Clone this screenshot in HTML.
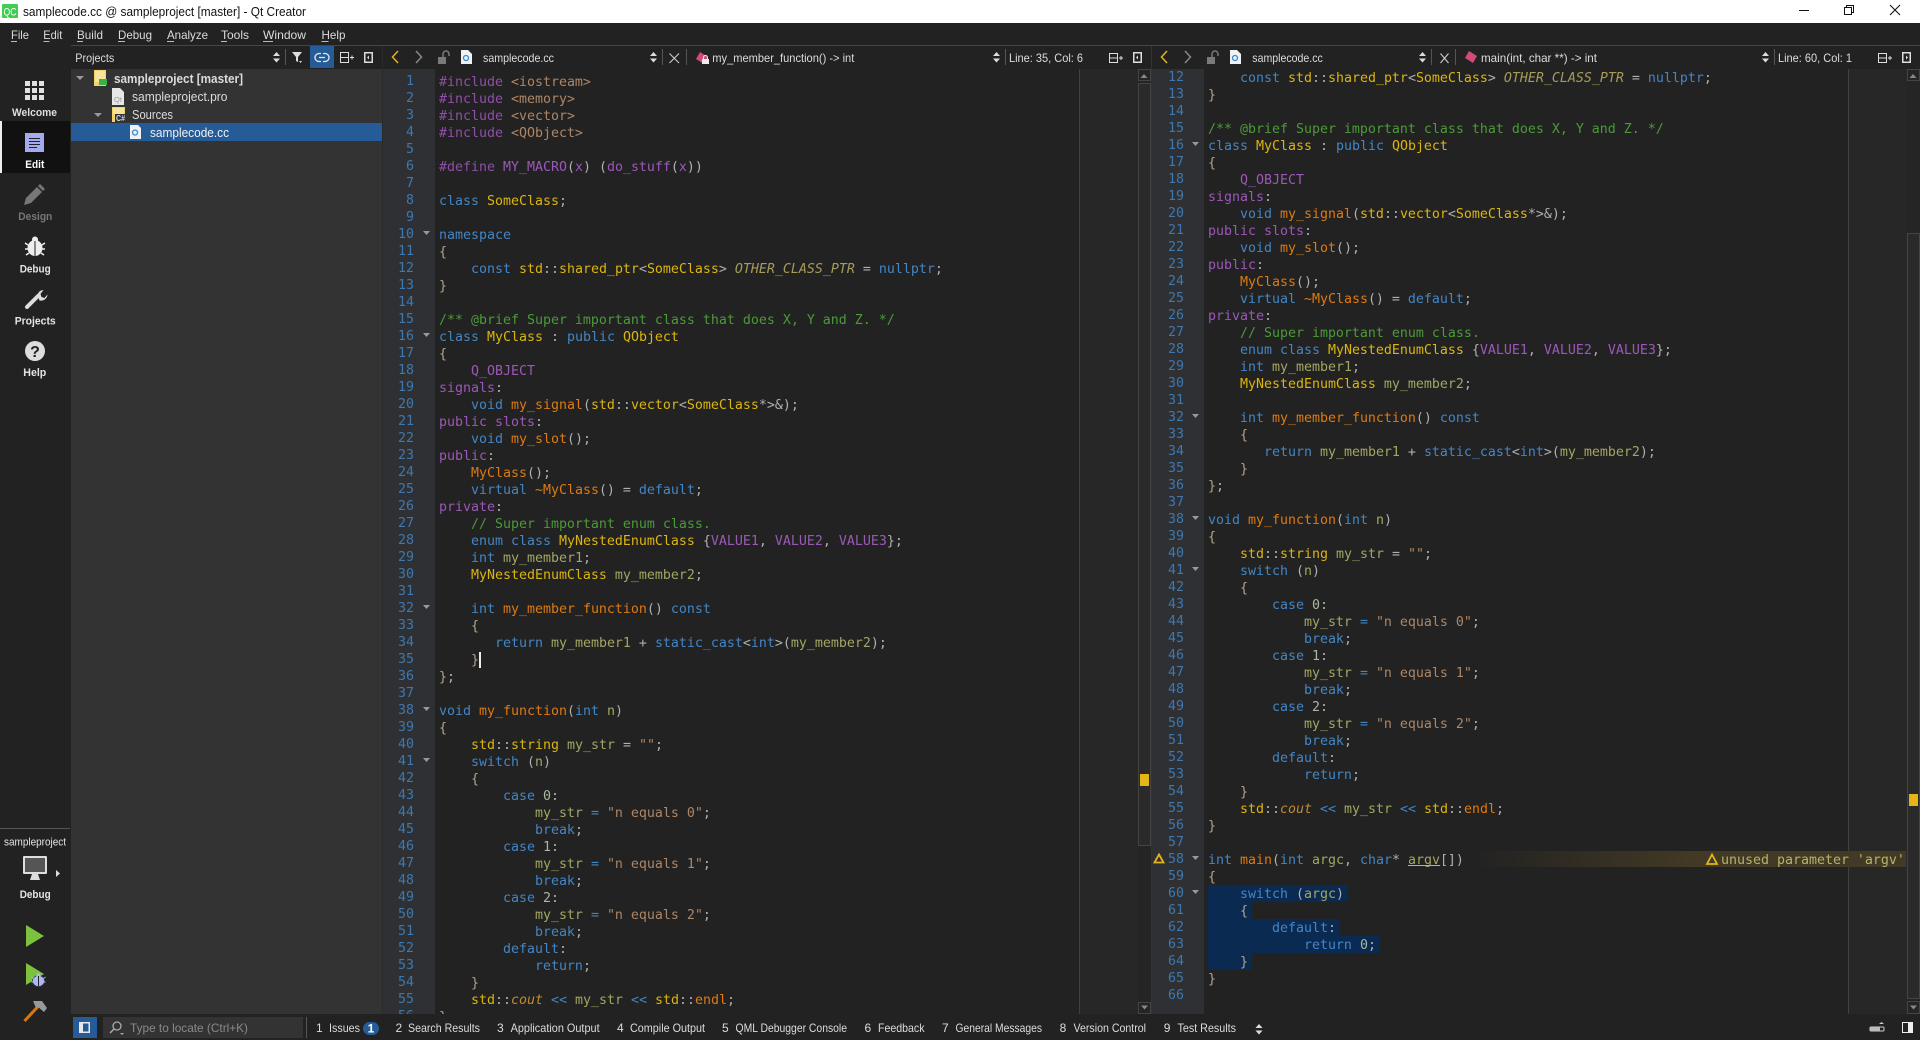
<!DOCTYPE html>
<html><head><meta charset="utf-8"><title>samplecode.cc @ sampleproject [master] - Qt Creator</title>
<style>
html,body{margin:0;padding:0;width:1920px;height:1040px;overflow:hidden;background:#222}
svg.l{position:absolute;left:0;top:0}
svg text{font-family:"Liberation Sans",sans-serif;font-size:12px;fill:#dcdcdc}
pre{position:absolute;margin:0;font:13.29px/17px "DejaVu Sans Mono","Liberation Mono",monospace;color:#b0b0b0;overflow:hidden;z-index:2}
.n{color:#3e78b0;text-align:right}
.k{color:#4386c5}.t{color:#dcb50e}.f{color:#de7a12}.c{color:#4c9a38}.p{color:#8f4fa8}.m{color:#9c58b8}.s{color:#ad8666}.v{color:#a3a662}.i{color:#a69c58;font-style:italic}.o{color:#a9b8a0}.b{color:#b3a48c}.y{color:#c08a30;font-style:italic}
</style></head><body>
<svg class="l" width="1920" height="1040" style="z-index:1">
<defs><linearGradient id="w" x1="0" x2="1"><stop offset="0" stop-color="#222"/><stop offset="1" stop-color="#433a25"/></linearGradient></defs>
<rect width="1920" height="23" fill="#fff"/>
<rect y="23" width="1920" height="22" fill="#222"/>
<rect x="71" y="45" width="1849" height="1" fill="#454545"/>
<rect x="71" y="69" width="311" height="945" fill="#333"/>
<rect x="0" y="121" width="70" height="52" fill="#111"/>
<rect x="0" y="121" width="2" height="52" fill="#eee"/>
<rect x="71" y="123" width="311" height="18" fill="#255c97"/>
<rect x="0" y="828" width="70" height="1" fill="#555"/>
<rect x="382" y="46" width="1" height="968" fill="#2a2a2a"/>
<rect x="383" y="69" width="52" height="945" fill="#2e3033"/>
<rect x="1152" y="69" width="52" height="945" fill="#2e3033"/>
<rect x="1151" y="46" width="1" height="968" fill="#333"/>
<rect x="1079" y="69" width="59" height="945" fill="#272727"/>
<rect x="1848" y="69" width="59" height="945" fill="#272727"/>
<rect x="1079" y="69" width="1" height="945" fill="#414141"/>
<rect x="1848" y="69" width="1" height="945" fill="#414141"/>
<rect x="1138" y="69" width="13" height="945" fill="#252525"/>
<rect x="1907" y="69" width="13" height="945" fill="#252525"/>
<rect x="1138.5" y="83.5" width="12" height="762" fill="#2a2a2a" stroke="#444"/>
<rect x="1907.5" y="233.5" width="12" height="765" fill="#2a2a2a" stroke="#444"/>
<rect x="1208" y="885" width="140" height="17" fill="#0a2a52"/>
<rect x="1208" y="902" width="44" height="17" fill="#0a2a52"/>
<rect x="1208" y="919" width="132" height="17" fill="#0a2a52"/>
<rect x="1208" y="936" width="172" height="17" fill="#0a2a52"/>
<rect x="1208" y="953" width="44" height="17" fill="#0a2a52"/>
<rect x="1473" y="851" width="227" height="16" fill="url(#w)"/>
<rect x="1700" y="851" width="206" height="16" fill="#433a25"/>
<rect x="103" y="1017" width="200" height="21" fill="#333"/>
<rect x="306" y="1017" width="1" height="21" fill="#555"/>
</svg>

<pre class="n" style="left:383px;top:73px;width:31px;height:941px">1
2
3
4
5
6
7
8
9
10
11
12
13
14
15
16
17
18
19
20
21
22
23
24
25
26
27
28
29
30
31
32
33
34
35
36
37
38
39
40
41
42
43
44
45
46
47
48
49
50
51
52
53
54
55
56</pre>
<pre style="left:439px;top:74px;width:690px;height:940px"><span class="p">#include</span> <span class="s">&lt;iostream&gt;</span>
<span class="p">#include</span> <span class="s">&lt;memory&gt;</span>
<span class="p">#include</span> <span class="s">&lt;vector&gt;</span>
<span class="p">#include</span> <span class="s">&lt;QObject&gt;</span>

<span class="p">#define</span> <span class="m">MY_MACRO</span>(<span class="m">x</span>) (<span class="m">do_stuff</span>(<span class="m">x</span>))

<span class="k">class</span> <span class="t">SomeClass</span>;

<span class="k">namespace</span>
<span class="b">{</span>
    <span class="k">const</span> <span class="t">std</span>::<span class="t">shared_ptr</span>&lt;<span class="t">SomeClass</span>&gt; <span class="i">OTHER_CLASS_PTR</span> = <span class="k">nullptr</span>;
<span class="b">}</span>

<span class="c">/** @brief Super important class that does X, Y and Z. */</span>
<span class="k">class</span> <span class="t">MyClass</span> : <span class="k">public</span> <span class="t">QObject</span>
<span class="b">{</span>
    <span class="m">Q_OBJECT</span>
<span class="m">signals</span>:
    <span class="k">void</span> <span class="f">my_signal</span>(<span class="t">std</span>::<span class="t">vector</span>&lt;<span class="t">SomeClass</span>*&gt;&amp;);
<span class="m">public slots</span>:
    <span class="k">void</span> <span class="f">my_slot</span>();
<span class="m">public</span>:
    <span class="f">MyClass</span>();
    <span class="k">virtual</span> <span class="f">~MyClass</span>() = <span class="k">default</span>;
<span class="m">private</span>:
    <span class="c">// Super important enum class.</span>
    <span class="k">enum class</span> <span class="t">MyNestedEnumClass</span> {<span class="m">VALUE1</span>, <span class="m">VALUE2</span>, <span class="m">VALUE3</span>};
    <span class="k">int</span> <span class="v">my_member1</span>;
    <span class="t">MyNestedEnumClass</span> <span class="v">my_member2</span>;

    <span class="k">int</span> <span class="f">my_member_function</span>() <span class="k">const</span>
    <span class="b">{</span>
       <span class="k">return</span> <span class="v">my_member1</span> + <span class="k">static_cast</span>&lt;<span class="k">int</span>&gt;(<span class="v">my_member2</span>);
    <span class="b">}</span>
<span class="b">}</span>;

<span class="k">void</span> <span class="f">my_function</span>(<span class="k">int</span> <span class="v">n</span>)
<span class="b">{</span>
    <span class="t">std</span>::<span class="t">string</span> <span class="v">my_str</span> = <span class="s">""</span>;
    <span class="k">switch</span> (<span class="v">n</span>)
    <span class="b">{</span>
        <span class="k">case</span> <span class="o">0</span>:
            <span class="v">my_str</span> <span class="k">=</span> <span class="s">"n equals 0"</span>;
            <span class="k">break</span>;
        <span class="k">case</span> <span class="o">1</span>:
            <span class="v">my_str</span> <span class="k">=</span> <span class="s">"n equals 1"</span>;
            <span class="k">break</span>;
        <span class="k">case</span> <span class="o">2</span>:
            <span class="v">my_str</span> <span class="k">=</span> <span class="s">"n equals 2"</span>;
            <span class="k">break</span>;
        <span class="k">default</span>:
            <span class="k">return</span>;
    <span class="b">}</span>
    <span class="t">std</span>::<span class="y">cout</span> <span class="k">&lt;&lt;</span> <span class="v">my_str</span> <span class="k">&lt;&lt;</span> <span class="t">std</span>::<span class="f">endl</span>;
<span class="b">}</span></pre>

<pre class="n" style="left:1153px;top:69px;width:31px;height:945px">12
13
14
15
16
17
18
19
20
21
22
23
24
25
26
27
28
29
30
31
32
33
34
35
36
37
38
39
40
41
42
43
44
45
46
47
48
49
50
51
52
53
54
55
56
57
58
59
60
61
62
63
64
65
66</pre>
<pre style="left:1208px;top:70px;width:690px;height:944px">    <span class="k">const</span> <span class="t">std</span>::<span class="t">shared_ptr</span>&lt;<span class="t">SomeClass</span>&gt; <span class="i">OTHER_CLASS_PTR</span> = <span class="k">nullptr</span>;
<span class="b">}</span>

<span class="c">/** @brief Super important class that does X, Y and Z. */</span>
<span class="k">class</span> <span class="t">MyClass</span> : <span class="k">public</span> <span class="t">QObject</span>
<span class="b">{</span>
    <span class="m">Q_OBJECT</span>
<span class="m">signals</span>:
    <span class="k">void</span> <span class="f">my_signal</span>(<span class="t">std</span>::<span class="t">vector</span>&lt;<span class="t">SomeClass</span>*&gt;&amp;);
<span class="m">public slots</span>:
    <span class="k">void</span> <span class="f">my_slot</span>();
<span class="m">public</span>:
    <span class="f">MyClass</span>();
    <span class="k">virtual</span> <span class="f">~MyClass</span>() = <span class="k">default</span>;
<span class="m">private</span>:
    <span class="c">// Super important enum class.</span>
    <span class="k">enum class</span> <span class="t">MyNestedEnumClass</span> {<span class="m">VALUE1</span>, <span class="m">VALUE2</span>, <span class="m">VALUE3</span>};
    <span class="k">int</span> <span class="v">my_member1</span>;
    <span class="t">MyNestedEnumClass</span> <span class="v">my_member2</span>;

    <span class="k">int</span> <span class="f">my_member_function</span>() <span class="k">const</span>
    <span class="b">{</span>
       <span class="k">return</span> <span class="v">my_member1</span> + <span class="k">static_cast</span>&lt;<span class="k">int</span>&gt;(<span class="v">my_member2</span>);
    <span class="b">}</span>
<span class="b">}</span>;

<span class="k">void</span> <span class="f">my_function</span>(<span class="k">int</span> <span class="v">n</span>)
<span class="b">{</span>
    <span class="t">std</span>::<span class="t">string</span> <span class="v">my_str</span> = <span class="s">""</span>;
    <span class="k">switch</span> (<span class="v">n</span>)
    <span class="b">{</span>
        <span class="k">case</span> <span class="o">0</span>:
            <span class="v">my_str</span> <span class="k">=</span> <span class="s">"n equals 0"</span>;
            <span class="k">break</span>;
        <span class="k">case</span> <span class="o">1</span>:
            <span class="v">my_str</span> <span class="k">=</span> <span class="s">"n equals 1"</span>;
            <span class="k">break</span>;
        <span class="k">case</span> <span class="o">2</span>:
            <span class="v">my_str</span> <span class="k">=</span> <span class="s">"n equals 2"</span>;
            <span class="k">break</span>;
        <span class="k">default</span>:
            <span class="k">return</span>;
    <span class="b">}</span>
    <span class="t">std</span>::<span class="y">cout</span> <span class="k">&lt;&lt;</span> <span class="v">my_str</span> <span class="k">&lt;&lt;</span> <span class="t">std</span>::<span class="f">endl</span>;
<span class="b">}</span>

<span class="k">int</span> <span class="f">main</span>(<span class="k">int</span> <span class="v">argc</span>, <span class="k">char</span>* <span class="v">argv</span>[])
<span class="b">{</span>
    <span class="k">switch</span> (<span class="v">argc</span>)
    <span class="b">{</span>
        <span class="k">default</span>:
            <span class="k">return</span> <span class="o">0</span>;
    <span class="b">}</span>
<span class="b">}</span>
</pre>
<pre style="left:1721px;top:852px;width:190px;height:17px;color:#b4b46a">unused parameter 'argv'</pre>

<svg class="l" width="1920" height="1040" style="z-index:3">
<!-- title bar -->
<rect x="2" y="4" width="16" height="14" rx="1" fill="#41cd52"/>
<text x="3.5" y="15.5" style="font-size:11px;fill:#fff" textLength="13" lengthAdjust="spacingAndGlyphs">QC</text>
<text x="23" y="16" style="font-size:12.5px;fill:#111" textLength="283" lengthAdjust="spacingAndGlyphs">samplecode.cc @ sampleproject [master] - Qt Creator</text>
<rect x="1799" y="10" width="10" height="1" fill="#111"/>
<path d="M1844.5 7.5h7v7h-7zM1846.5 7.5v-2h7v7h-2" fill="none" stroke="#111"/>
<path d="M1890 5l10 10M1900 5l-10 10" stroke="#111" stroke-width="1.1"/>
<!-- menu -->
<text x="11" y="39" textLength="18" lengthAdjust="spacingAndGlyphs">File</text>
<text x="43.3" y="39" textLength="19" lengthAdjust="spacingAndGlyphs">Edit</text>
<text x="77" y="39" textLength="26" lengthAdjust="spacingAndGlyphs">Build</text>
<text x="118" y="39" textLength="34" lengthAdjust="spacingAndGlyphs">Debug</text>
<text x="167" y="39" textLength="41" lengthAdjust="spacingAndGlyphs">Analyze</text>
<text x="221" y="39" textLength="28" lengthAdjust="spacingAndGlyphs">Tools</text>
<text x="263" y="39" textLength="43" lengthAdjust="spacingAndGlyphs">Window</text>
<text x="321.5" y="39" textLength="24" lengthAdjust="spacingAndGlyphs">Help</text>
<path d="M11 41.5h6M43.5 41.5h6M77 41.5h6M118 41.5h7M167 41.5h7M221 41.5h6M263 41.5h10M321.5 41.5h7" stroke="#bbb"/>
<!-- project toolbar -->
<text x="75.3" y="62" textLength="39" lengthAdjust="spacingAndGlyphs">Projects</text>
<g fill="#ddd">
<path d="M273 56l3.5-4 3.5 4zM273 58.5h7l-3.5 4z"/>
<path d="M650 56l3.5-4 3.5 4zM650 58.5h7l-3.5 4z"/>
<path d="M993 56l3.5-4 3.5 4zM993 58.5h7l-3.5 4z"/>
<path d="M1419 56l3.5-4 3.5 4zM1419 58.5h7l-3.5 4z"/>
<path d="M1762 56l3.5-4 3.5 4zM1762 58.5h7l-3.5 4z"/>
<path d="M1255.5 1028l3.5-4 3.5 4zM1255.5 1030.5h7l-3.5 4z"/>
</g>
<path d="M285.5 49v16M662.5 49v16M686.5 49v16M1005.5 49v16M1431.5 49v16M1455.5 49v16M1774.5 49v16" stroke="#555"/>
<path d="M292 52h10l-4 5v5l-2-1v-4z" fill="#ddd"/><path d="M299 61h3l-1.500 2z" fill="#ddd"/>
<rect x="310" y="46" width="24" height="22" fill="#255c97"/>
<path d="M321 53.500h-2a4 4 0 0 0 0 8h2M323 53.500h2a4 4 0 0 1 0 8h-2M319 57.500h6" fill="none" stroke="#e8e8e8" stroke-width="1.300"/>
<g fill="none" stroke="#ddd">
<rect x="340.500" y="52.500" width="8" height="10"/><path d="M340.500 57.500h8M350 57.500h4M352 55.500v4"/>
<rect x="1109.500" y="53.500" width="8" height="9"/><path d="M1109.500 58h8M1119 58h4M1121 56v4"/>
<rect x="1878.500" y="53.500" width="8" height="9"/><path d="M1878.500 58h8M1888 58h4M1890 56v4"/>
</g>
<g>
<rect x="364" y="52" width="9" height="11" fill="#ddd"/><rect x="365.500" y="53.500" width="6" height="8" fill="#222"/><path d="M369 55.500v4l-2-2z" fill="#ddd"/>
<rect x="1133" y="52" width="9" height="11" fill="#ddd"/><rect x="1134.500" y="53.500" width="6" height="8" fill="#222"/><path d="M1138 55.500v4l-2-2z" fill="#ddd"/>
<rect x="1902" y="52" width="9" height="11" fill="#ddd"/><rect x="1903.500" y="53.500" width="6" height="8" fill="#222"/><path d="M1906 55.500v4l2-2z" fill="#ddd"/>
</g>
<!-- nav chevrons -->
<path d="M398 51l-5.500 6 5.500 6M1167 51l-5.500 6 5.500 6" fill="none" stroke="#e3b41b" stroke-width="1.500"/>
<path d="M416 51l5.500 6-5.500 6M1185 51l5.500 6-5.500 6" fill="none" stroke="#888" stroke-width="1.500"/>
<!-- lock -->
<g fill="#7a7a7a"><rect x="438" y="57" width="8" height="7"/><path d="M443 57v-3a3 3 0 0 1 6 0v2" fill="none" stroke="#7a7a7a" stroke-width="1.500"/>
<rect x="1207" y="57" width="8" height="7"/><path d="M1212 57v-3a3 3 0 0 1 6 0v2" fill="none" stroke="#7a7a7a" stroke-width="1.500"/></g>
<!-- file icons -->
<path d="M461 50h7l4 4v10h-11z" fill="#eef1f5"/><circle cx="466" cy="58" r="2.500" fill="none" stroke="#3a88c8" stroke-width="1.300"/>
<path d="M1230 50h7l4 4v10h-11z" fill="#eef1f5"/><circle cx="1235" cy="58" r="2.500" fill="none" stroke="#3a88c8" stroke-width="1.300"/>
<text x="483" y="62" textLength="71" lengthAdjust="spacingAndGlyphs">samplecode.cc</text>
<text x="1252.300" y="62" textLength="70.500" lengthAdjust="spacingAndGlyphs">samplecode.cc</text>
<path d="M669.500 53.500l9.500 9.500M679 53.500l-9.500 9.500M1440.500 53.500l8 9.500M1448.500 53.500l-8 9.500" stroke="#ccc" stroke-width="1.100"/>
<path d="M700 52l8 5-4 7-8-5z" fill="#d04a7a"/>
<rect x="702" y="59" width="7" height="5" fill="#eee"/><path d="M703.500 59v-1.500a2 2 0 0 1 4 0v1.500" fill="none" stroke="#eee"/>
<path d="M1469 51l8 5-4 7-8-5z" fill="#d04a7a"/>
<text x="712.300" y="62" textLength="142" lengthAdjust="spacingAndGlyphs">my_member_function() -&gt; int</text>
<text x="1481" y="62" textLength="116" lengthAdjust="spacingAndGlyphs">main(int, char **) -&gt; int</text>
<text x="1009" y="62" textLength="74" lengthAdjust="spacingAndGlyphs">Line: 35, Col: 6</text>
<text x="1778" y="62" textLength="74" lengthAdjust="spacingAndGlyphs">Line: 60, Col: 1</text>
<!-- tree -->
<path d="M76 76h8l-4 4zM94 113h8l-4 4z" fill="#999"/>
<path d="M94 70h12v16h-12z" fill="#f1d36a"/><rect x="95" y="71" width="10" height="11" fill="#f6e49a"/><rect x="99" y="79" width="8" height="6" fill="#3cb04a"/>
<path d="M112 88h8l4 4v13h-12z" fill="#e6e6e6"/><text x="114" y="102" style="font-size:7px;fill:#999" textLength="8" lengthAdjust="spacingAndGlyphs">Qt</text>
<rect x="112" y="107" width="13" height="15" fill="#f1d36a"/><rect x="113" y="108" width="11" height="6" fill="#f6e49a"/><rect x="115" y="114" width="11" height="8" fill="#333"/>
<text x="116" y="121" style="font-size:8px;font-weight:bold;fill:#cde" textLength="9" lengthAdjust="spacingAndGlyphs">C#</text>
<path d="M130 125h8l3 3v11h-11z" fill="#eef1f5"/><circle cx="135" cy="132.500" r="2.500" fill="none" stroke="#3a88c8" stroke-width="1.300"/>
<text x="114" y="83" style="font-size:12.500px;font-weight:bold" textLength="129" lengthAdjust="spacingAndGlyphs">sampleproject [master]</text>
<text x="132" y="101" style="font-size:12.500px" textLength="95.500" lengthAdjust="spacingAndGlyphs">sampleproject.pro</text>
<text x="132" y="119" style="font-size:12.500px" textLength="41" lengthAdjust="spacingAndGlyphs">Sources</text>
<text x="150" y="137" style="font-size:12.500px;fill:#f0f0f0" textLength="79" lengthAdjust="spacingAndGlyphs">samplecode.cc</text>
<!-- fold marks -->
<g fill="#999">
<path d="M423 231h7l-3.500 4zM423 333h7l-3.500 4zM423 605h7l-3.500 4zM423 707h7l-3.500 4zM423 758h7l-3.500 4z"/>
<path d="M1192 142h7l-3.500 4zM1192 414h7l-3.500 4zM1192 516h7l-3.500 4zM1192 567h7l-3.500 4zM1192 856h7l-3.500 4zM1192 890h7l-3.500 4z"/>
</g>
<rect x="479" y="652" width="2" height="16" fill="#eee"/>
<rect x="1408" y="865" width="32" height="1" fill="#e3b41b"/>
<path d="M1159 854.500l4.500 8h-9zM1712 854.500l5 9.500h-10z" fill="none" stroke="#e3b41b" stroke-width="1.800"/>
<!-- scrollbars -->
<g fill="none" stroke="#444"><rect x="1138.500" y="69.500" width="12" height="11"/><rect x="1138.500" y="1002.500" width="12" height="11"/><rect x="1907.500" y="69.500" width="12" height="11"/><rect x="1907.500" y="1001.500" width="12" height="12"/></g>
<g fill="#888"><path d="M1140.500 78h7l-3.500-4zM1909.500 78h7l-3.500-4zM1141 1005.500h7l-3.500 4zM1910 1005.500h7l-3.500 4z"/></g>
<rect x="1140" y="774" width="9" height="12" fill="#e5b716"/>
<rect x="1909" y="794" width="9" height="12" fill="#e5b716"/>
<!-- sidebar icons -->
<g fill="#e0e0e0">
<rect x="25" y="81" width="5" height="5"/><rect x="32" y="81" width="5" height="5"/><rect x="39" y="81" width="5" height="5"/>
<rect x="25" y="88" width="5" height="5"/><rect x="32" y="88" width="5" height="5"/><rect x="39" y="88" width="5" height="5"/>
<rect x="25" y="95" width="5" height="5"/><rect x="32" y="95" width="5" height="5"/><rect x="39" y="95" width="5" height="5"/>
</g>
<rect x="25" y="133" width="19" height="19" fill="#a4aaee"/>
<path d="M29 138.500h11M29 141.500h11M29 144.500h11M29 147.500h8" stroke="#222"/>
<path d="M24 205l2-7 11-11 5 5-11 11zM38 186l2-2 5 5-2 2z" fill="#777"/>
<g fill="#eee"><circle cx="35" cy="239.500" r="3"/><ellipse cx="35" cy="248" rx="7.500" ry="8"/></g>
<path d="M35 241v15" stroke="#222"/><path d="M25 243l3 2M45 243l-3 2M25 249h3M45 249h-3M26 255l3-2M44 255l-3-2" stroke="#eee" stroke-width="1.500"/>
<path d="M27 307l11-11" stroke="#ddd" stroke-width="4" stroke-linecap="round"/>
<path d="M37.500 295a6 6 0 0 1 6-5l-3 4 1 3 3 1 3-3.500a6.500 6.500 0 0 1-8 6z" fill="#ddd"/>
<circle cx="35" cy="351" r="10" fill="#ddd"/>
<text x="35" y="357" text-anchor="middle" style="font-size:16px;font-weight:bold;fill:#222">?</text>
<rect x="23" y="856" width="24" height="18" rx="1" fill="#ddd"/><rect x="25" y="858" width="20" height="14" fill="#555"/><path d="M32 874h6l2 6h-10z" fill="#ddd"/>
<path d="M56 870l4 3.500-4 3.500z" fill="#ddd"/>
<path d="M26 925v22l18-11z" fill="#7dc23c"/>
<path d="M26 963v22l18-11z" fill="#7dc23c"/>
<ellipse cx="38.500" cy="981" rx="6" ry="5.500" fill="#b0b8f0" stroke="#2a3a5a" stroke-width=".8"/><circle cx="38.500" cy="975.500" r="2.200" fill="#b0b8f0"/><path d="M38.500 976v10" stroke="#222"/><path d="M31.500 977l2 1.500M45.500 977l-2 1.500M31.500 982h2M45.500 982h-2" stroke="#b0b8f0"/>
<path d="M24.500 1021l14-15" stroke="#d9770f" stroke-width="3"/>
<path d="M33 1001h9l5 7-3 4-6-5-2 1z" fill="#999"/>
<!-- sidebar labels -->
<text x="12" y="116" style="font-size:11px;font-weight:bold;fill:#dedede" textLength="45" lengthAdjust="spacingAndGlyphs">Welcome</text>
<text x="25.300" y="168" style="font-size:11px;font-weight:bold;fill:#fff" textLength="19" lengthAdjust="spacingAndGlyphs">Edit</text>
<text x="18.300" y="220" style="font-size:11px;font-weight:bold;fill:#777" textLength="34" lengthAdjust="spacingAndGlyphs">Design</text>
<text x="19.700" y="272.500" style="font-size:11px;font-weight:bold;fill:#e4e4e4" textLength="31" lengthAdjust="spacingAndGlyphs">Debug</text>
<text x="14.700" y="324.500" style="font-size:11px;font-weight:bold;fill:#e4e4e4" textLength="41" lengthAdjust="spacingAndGlyphs">Projects</text>
<text x="23.300" y="376" style="font-size:11px;font-weight:bold;fill:#e4e4e4" textLength="23" lengthAdjust="spacingAndGlyphs">Help</text>
<text x="19.700" y="898" style="font-size:11px;font-weight:bold;fill:#e4e4e4" textLength="31" lengthAdjust="spacingAndGlyphs">Debug</text>
<text x="4" y="845.500" style="font-size:11px;fill:#e4e4e4" textLength="62" lengthAdjust="spacingAndGlyphs">sampleproject</text>
<!-- bottom bar -->
<rect x="73" y="1017" width="24" height="21" fill="#255c97"/>
<rect x="79" y="1022" width="11" height="11" fill="#e8e8e8"/><rect x="83" y="1023.500" width="5.500" height="8" fill="#255c97"/>
<circle cx="117" cy="1026" r="4" fill="none" stroke="#aaa" stroke-width="1.300"/><path d="M114 1029l-4 4" stroke="#aaa" stroke-width="1.500"/><path d="M120 1033h4l-2 2z" fill="#aaa"/>
<text x="130" y="1032" style="fill:#8a8a8a" textLength="118" lengthAdjust="spacingAndGlyphs">Type to locate (Ctrl+K)</text>
<text x="316" y="1032">1</text><text x="329" y="1032" textLength="31" lengthAdjust="spacingAndGlyphs">Issues</text>
<rect x="363" y="1022" width="16" height="13" rx="6.500" fill="#255c97"/><text x="371" y="1032.500" text-anchor="middle" style="font-weight:bold;fill:#fff">1</text>
<text x="395.500" y="1032">2</text><text x="408" y="1032" textLength="72" lengthAdjust="spacingAndGlyphs">Search Results</text>
<text x="497" y="1032">3</text><text x="510.600" y="1032" textLength="89" lengthAdjust="spacingAndGlyphs">Application Output</text>
<text x="617" y="1032">4</text><text x="630" y="1032" textLength="75" lengthAdjust="spacingAndGlyphs">Compile Output</text>
<text x="722" y="1032">5</text><text x="735.500" y="1032" textLength="111.500" lengthAdjust="spacingAndGlyphs">QML Debugger Console</text>
<text x="864.500" y="1032">6</text><text x="878" y="1032" textLength="46.500" lengthAdjust="spacingAndGlyphs">Feedback</text>
<text x="942" y="1032">7</text><text x="955.500" y="1032" textLength="86.500" lengthAdjust="spacingAndGlyphs">General Messages</text>
<text x="1059.600" y="1032">8</text><text x="1073.500" y="1032" textLength="72.500" lengthAdjust="spacingAndGlyphs">Version Control</text>
<text x="1163.700" y="1032">9</text><text x="1177.500" y="1032" textLength="58.500" lengthAdjust="spacingAndGlyphs">Test Results</text>
<rect x="1870" y="1027" width="14" height="4" rx="1" fill="none" stroke="#ccc"/><rect x="1870" y="1027" width="10" height="4" fill="#bbb"/><path d="M1879 1024h5l-2.500-2z" fill="#ccc"/>
<rect x="1902" y="1022" width="11" height="11" fill="#eee"/><rect x="1903" y="1023" width="5" height="9" fill="#222"/>
</svg>
</body></html>
